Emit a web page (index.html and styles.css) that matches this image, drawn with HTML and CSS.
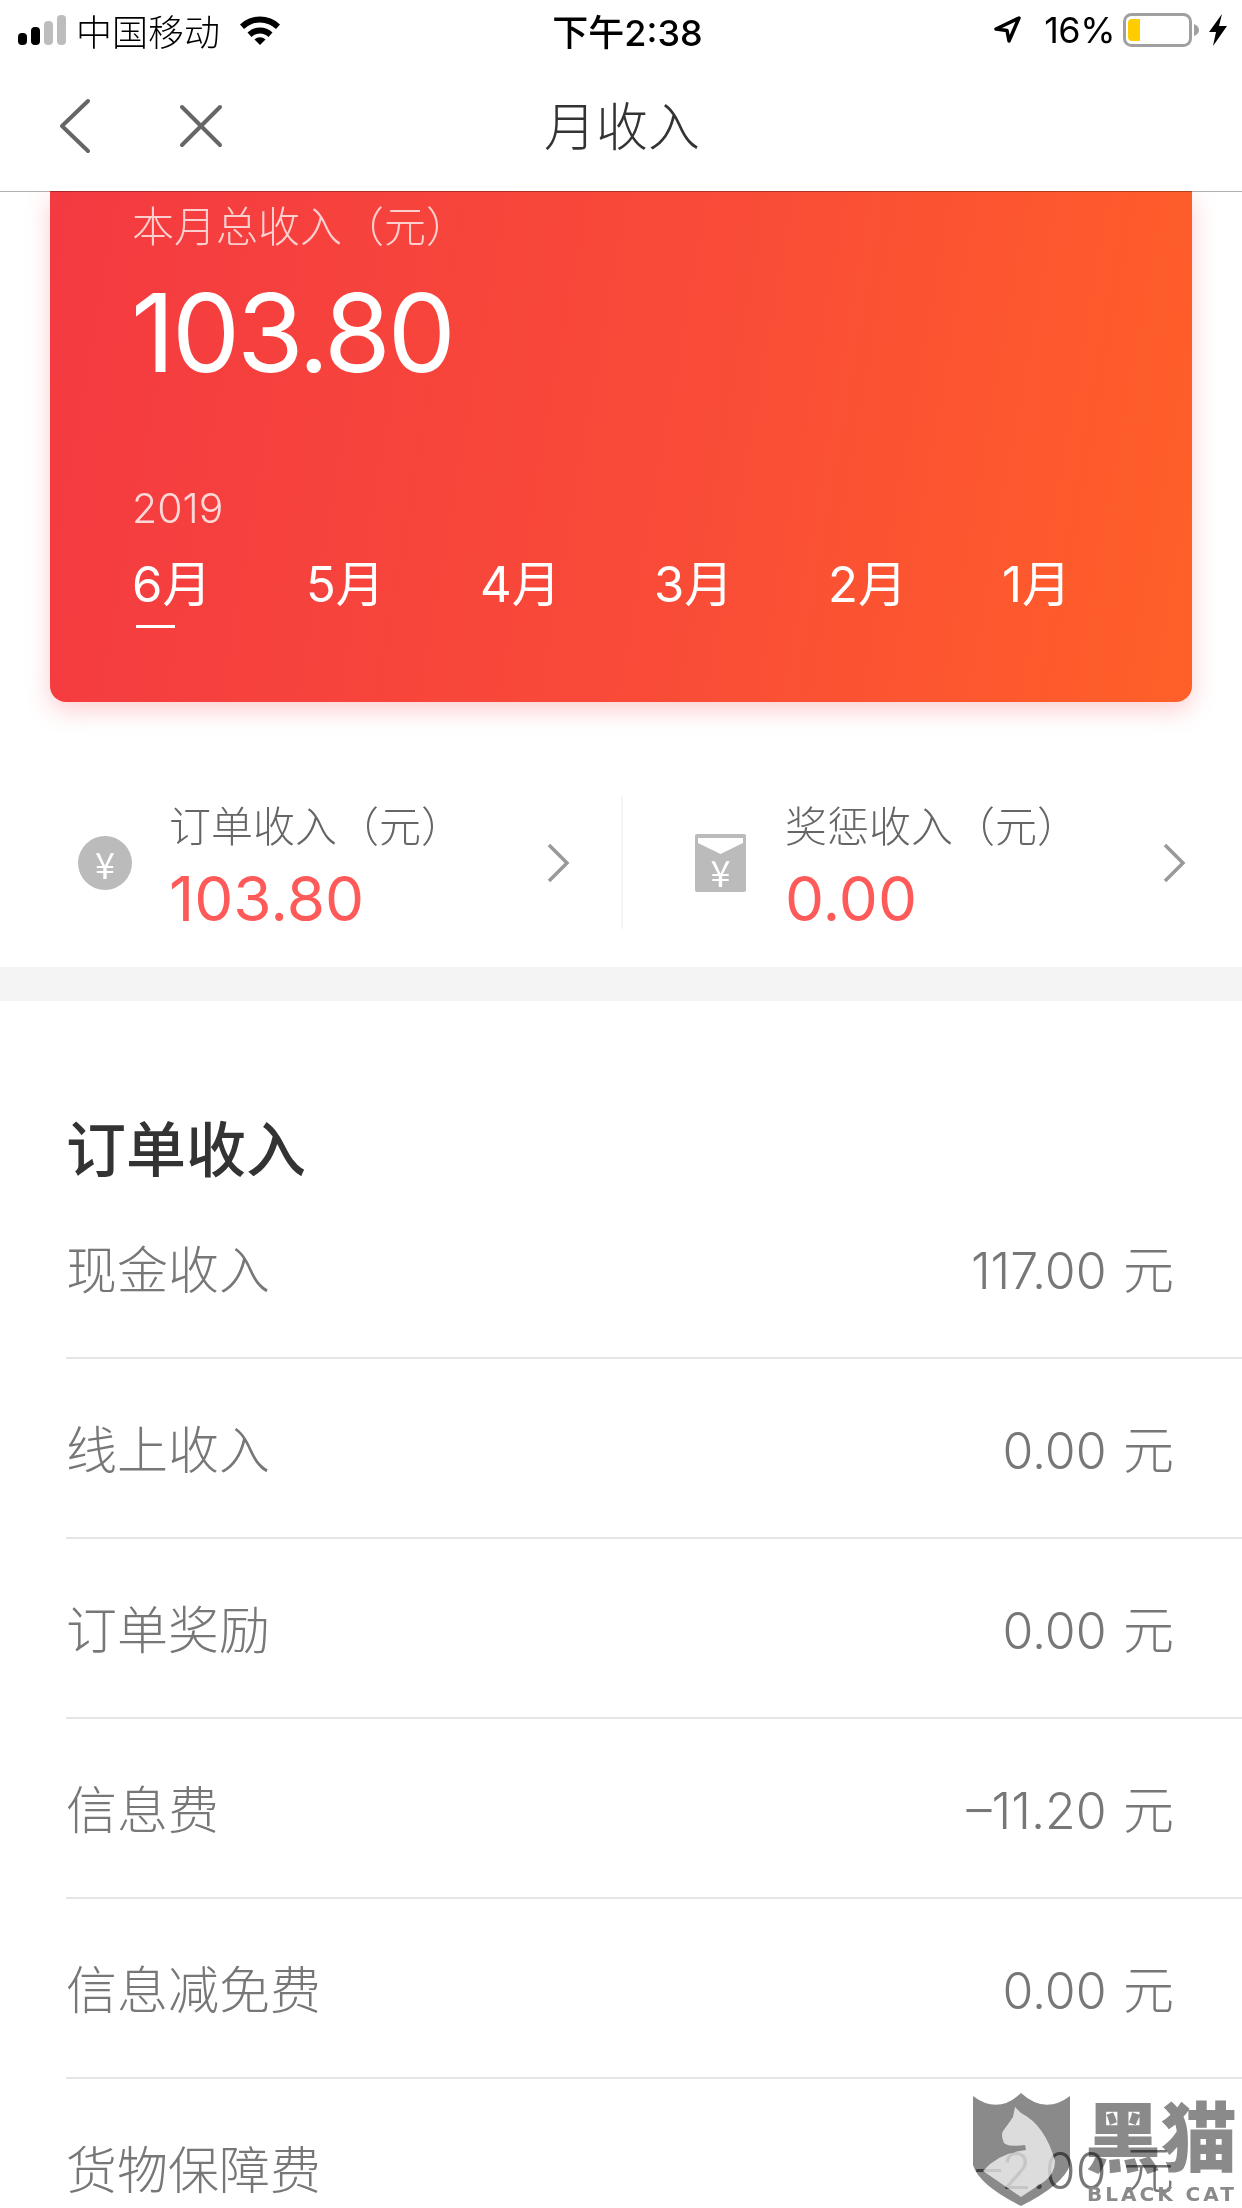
FILE: index.html
```
<!doctype html>
<html>
<head>
  <meta charset="utf-8">
  <link rel="stylesheet" href="styles.css">
</head>
<body>
  <div class="page">
    <div class="header">
      <div class="status">
        <div class="status-left">
          <svg class="signal" width="48" height="30" viewBox="0 0 48 30">
            <rect x="0" y="18" width="9" height="12" rx="4" fill="#000"/>
            <rect x="13" y="12" width="9" height="18" rx="4" fill="#000"/>
            <rect x="26" y="6" width="9" height="24" rx="4" fill="#bdbdbd"/>
            <rect x="39" y="0" width="9" height="30" rx="4" fill="#bdbdbd"/>
          </svg>
          <span class="carrier">中国移动</span>
          <svg class="wifi" width="42" height="30" viewBox="0 0 42 30">
            <path d="M1 9.5 A29 29 0 0 1 41 9.5 L37 14 A23 23 0 0 0 5 14 Z" fill="#000"/>
            <path d="M8.5 17.5 A18 18 0 0 1 33.500 17.500 L29.500 22 A12 12 0 0 0 12.500 22 Z" fill="#000"/>
            <path d="M15.500 24.500 A8 8 0 0 1 26.500 24.500 L21 30 Z" fill="#000"/>
          </svg>
        </div>
        <div class="clock">下午2:38</div>
        <div class="status-right">
          <svg width="28" height="28" viewBox="0 0 28 28">
            <path d="M26 2 L3 13 L14 14.500 L16 25 Z" fill="none" stroke="#000" stroke-width="3.500" stroke-linejoin="round"/>
          </svg>
          <span class="percent">16%</span>
          <svg width="78" height="34" viewBox="0 0 78 34">
            <rect x="1.500" y="1.500" width="66" height="31" rx="7" fill="none" stroke="#a0a0a0" stroke-width="3"/>
            <path d="M5 10 Q5 6 9 6 H17 V28 H9 Q5 28 5 24 Z" fill="#ffcc00"/>
            <path d="M71 11 Q76 13 76 17 Q76 21 71 23 Z" fill="#a0a0a0"/>
          </svg>
          <svg width="18" height="32" viewBox="0 0 18 32">
            <path d="M13 0 L0 18 H7 L4 32 L18 12 H10 Z" fill="#000"/>
          </svg>
        </div>
      </div>
      <div class="nav">
        <div class="nav-left">
          <svg width="33" height="56" viewBox="0 0 33 56">
            <path d="M30 3 L4 28 L30 53" fill="none" stroke="#666" stroke-width="4" stroke-linecap="round" stroke-linejoin="round"/>
          </svg>
          <svg width="44" height="44" viewBox="0 0 44 44">
            <path d="M3 3 L41 41 M41 3 L3 41" fill="none" stroke="#666" stroke-width="4" stroke-linecap="round"/>
          </svg>
        </div>
        <div class="nav-title">月收入</div>
        <div></div>
      </div>
    </div>

    <div class="card">
      <div class="card-label">本月总收入（元）</div>
      <div class="card-total">103.80</div>
      <div class="card-year">2019</div>
      <div class="months">
        <div class="month active">6月<div class="month-line"></div></div>
        <div class="month">5月</div>
        <div class="month">4月</div>
        <div class="month">3月</div>
        <div class="month">2月</div>
        <div class="month">1月</div>
      </div>
    </div>

    <div class="stats">
      <div class="stat">
        <div class="coin">¥</div>
        <div>
          <div class="stat-label">订单收入（元）</div>
          <div class="stat-value">103.80</div>
        </div>
        <svg class="more" width="24" height="42" viewBox="0 0 24 42">
          <path d="M3 3 L21 21 L3 39" fill="none" stroke="#999" stroke-width="3.500"/>
        </svg>
      </div>
      <div class="stat second">
        <div class="envelope">
          <svg class="flap" width="51" height="20" viewBox="0 0 51 20">
            <path d="M3 4 H48 V9 L25.500 20 L3 9 Z" fill="#fff"/>
          </svg>
          <span>¥</span>
        </div>
        <div>
          <div class="stat-label">奖惩收入（元）</div>
          <div class="stat-value">0.00</div>
        </div>
        <svg class="more" width="24" height="42" viewBox="0 0 24 42">
          <path d="M3 3 L21 21 L3 39" fill="none" stroke="#999" stroke-width="3.500"/>
        </svg>
      </div>
    </div>
    <div class="band"></div>

    <h2 class="section-title">订单收入</h2>
    <div class="row"><span>现金收入</span><span class="money"><span class="num">117.00</span> 元</span></div>
    <div class="row"><span>线上收入</span><span class="money"><span class="num">0.00</span> 元</span></div>
    <div class="row"><span>订单奖励</span><span class="money"><span class="num">0.00</span> 元</span></div>
    <div class="row"><span>信息费</span><span class="money"><span class="num">–11.20</span> 元</span></div>
    <div class="row"><span>信息减免费</span><span class="money"><span class="num">0.00</span> 元</span></div>
    <div class="row"><span>货物保障费</span><span class="money"><span class="num">–2.00</span> 元</span></div>

    <div class="watermark">
      <svg class="shield" width="97" height="113" viewBox="0 0 97 113">
        <path d="M0 3 Q25 22 48 0 Q72 22 97 3 V72 Q90 92 48 113 Q6 92 0 72 Z" fill="#8a8a8a"/>
      </svg>
      <svg class="cat" width="97" height="113" viewBox="0 0 97 113">
        <path d="M42 14 L48 20 Q72 32 82 68 Q82 80 72 88 L48 104 L10 78 Q25 60 53 57 L52 52 Q30 55 30 47 Q28 42 30 38 Q36 30 40 24 Z" fill="#fff" opacity="0.7"/>
      </svg>
      <div class="wm-name">黑猫</div>
      <div class="wm-en">BLACK CAT</div>
    </div>
  </div>
</body>
</html>
```

FILE: styles.css
```
body {
  margin: 0;
  background: #fff;
  font-family: Inter, "Noto Sans CJK SC", sans-serif;
}
.page {
  position: relative;
  width: 1242px;
  height: 2208px;
  overflow: hidden;
}

.header {
  position: relative;
  z-index: 2;
  background: #fff;
  background-clip: padding-box;
  border-bottom: 1px solid rgba(0, 0, 0, 0.3);
}
.status {
  display: grid;
  grid-template-columns: 1fr auto 1fr;
  align-items: center;
  height: 60px;
  padding: 0 15px 0 18px;
  color: #000;
  font-size: 36px;
}
.status-left {
  display: flex;
  align-items: center;
}
.carrier {
  margin-left: 10px;
  font-weight: 300;
}
.wifi {
  margin-left: 19px;
}
.clock {
  padding-left: 10px;
  font-weight: 500;
}
.status-right {
  display: flex;
  align-items: center;
  justify-content: flex-end;
  gap: 8px;
}
.percent {
  margin-left: 15px;
  letter-spacing: -0.5px;
}
.nav {
  display: grid;
  grid-template-columns: 1fr auto 1fr;
  align-items: center;
  height: 131px;
}
.nav-left {
  display: flex;
  align-items: center;
  gap: 88px;
  padding-left: 58px;
}
.nav-title {
  margin-top: -4px;
  padding-left: 2px;
  font-size: 52px;
  font-weight: 300;
  color: #333;
}

.card {
  margin: -1px 50px 0;
  height: 511px;
  padding: 11px 0 0 82px;
  box-sizing: border-box;
  color: #fff;
  background: linear-gradient(100deg, #f43a41, #f94b38 55%, #ff6028);
  border-radius: 0 0 16px 16px;
  box-shadow: 0 8px 24px rgba(246, 59, 66, 0.25);
}
.card-label {
  font-size: 42px;
  line-height: 50px;
  font-weight: 300;
  color: rgba(255, 255, 255, 0.75);
}
.card-total {
  margin: 21px 0 0 -1px;
  font-size: 108px;
  line-height: 120px;
  letter-spacing: -3px;
}
.card-year {
  margin-top: 90px;
  font-size: 41px;
  line-height: 50px;
  font-weight: 300;
  color: rgba(255, 255, 255, 0.8);
}
.months {
  display: flex;
  margin-top: 22px;
}
.month {
  width: 174px;
  font-size: 49px;
  line-height: 60px;
  font-weight: 400;
}
.month-line {
  width: 39px;
  height: 3px;
  margin: 10px 0 0 4px;
  background: #fff;
}

.stats {
  display: flex;
  padding: 94px 0 38px;
}
.stat {
  display: flex;
  align-items: center;
  width: 621px;
  height: 133px;
  box-sizing: border-box;
  padding: 0 51px 0 78px;
}
.stat.second {
  padding: 0 56px 0 72px;
  border-left: 2px solid #f5f5f5;
}
.coin {
  display: flex;
  align-items: center;
  justify-content: center;
  width: 54px;
  height: 54px;
  margin-right: 37px;
  border-radius: 50%;
  color: #fff;
  background: #bbb;
  font-family: "Noto Sans CJK SC", sans-serif;
  font-size: 36px;
}
.envelope {
  position: relative;
  display: flex;
  align-items: flex-end;
  justify-content: center;
  width: 51px;
  height: 58px;
  margin-right: 39px;
  border-radius: 2px;
  color: #fff;
  background: #bbb;
  font-family: "Noto Sans CJK SC", sans-serif;
  font-size: 36px;
  line-height: 42px;
}
.flap {
  position: absolute;
  left: 0;
  top: 0;
}
.stat-label {
  font-size: 42px;
  line-height: 62px;
  font-weight: 300;
  color: #666;
}
.stat-value {
  margin-top: 10px;
  font-size: 62px;
  line-height: 62px;
  color: #ff5a5a;
}
.more {
  margin-left: auto;
}
.band {
  height: 34px;
  background: #f4f4f4;
}

.section-title {
  margin: 0;
  padding: 120px 0 0 66px;
  font-size: 60px;
  line-height: 58px;
  font-weight: 500;
  color: #333;
}
.row {
  display: flex;
  align-items: center;
  justify-content: space-between;
  height: 180px;
  box-sizing: border-box;
  margin-left: 66px;
  padding: 0 68px 2px 0;
  border-bottom: 2px solid #e5e5e5;
  font-size: 51px;
  font-weight: 300;
  color: #777;
}
.num {
  margin-right: 2px;
  font-size: 50px;
}

.watermark {
  position: absolute;
  left: 973px;
  top: 2093px;
  width: 269px;
  height: 115px;
}
.shield {
  position: absolute;
  left: 0;
  top: 0;
  mix-blend-mode: multiply;
}
.cat {
  position: absolute;
  left: 0;
  top: 0;
}
.wm-name {
  position: absolute;
  left: 112px;
  top: 0;
  font-size: 76px;
  line-height: 90px;
  font-weight: 900;
  color: #8a8a8a;
  mix-blend-mode: multiply;
}
.wm-en {
  position: absolute;
  left: 114px;
  top: 90px;
  font-family: "DejaVu Sans", sans-serif;
  font-size: 20px;
  line-height: 22px;
  font-weight: 700;
  letter-spacing: 3px;
  color: #8a8a8a;
}
```
